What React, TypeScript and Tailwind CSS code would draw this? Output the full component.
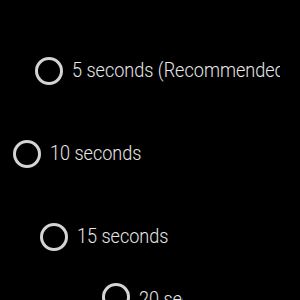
const options = [
  { label: '5 seconds (Recommended)', row: 'mt-[57px] ml-[35px] w-[245px]', text: '' },
  { label: '10 seconds', row: 'mt-[55px] ml-[13px] w-[245px]', text: '' },
  { label: '15 seconds', row: 'mt-[55px] ml-[40px] w-[245px]', text: '' },
  { label: '20 seconds', row: 'mt-[32px] ml-[102px] w-[81px]', text: 'translate-y-[3px]' },
]

export default function App() {
  return (
    <div className="w-[300px] h-[300px] bg-black overflow-hidden flex flex-col" style={{ fontFamily: 'Roboto, "Noto Sans", sans-serif' }}>
      {options.map(o => (
        <div key={o.label} className={`${o.row} h-[28px] shrink-0 flex items-center gap-[9px] overflow-hidden`}>
          <span className="w-[28px] h-[28px] shrink-0 rounded-full border-[3px] border-[#d4d4d4]" />
          <span className={`${o.text} whitespace-nowrap text-[21px] font-light text-[#e8e8e8] origin-left scale-x-[0.86]`}>{o.label}</span>
        </div>
      ))}
    </div>
  )
}
